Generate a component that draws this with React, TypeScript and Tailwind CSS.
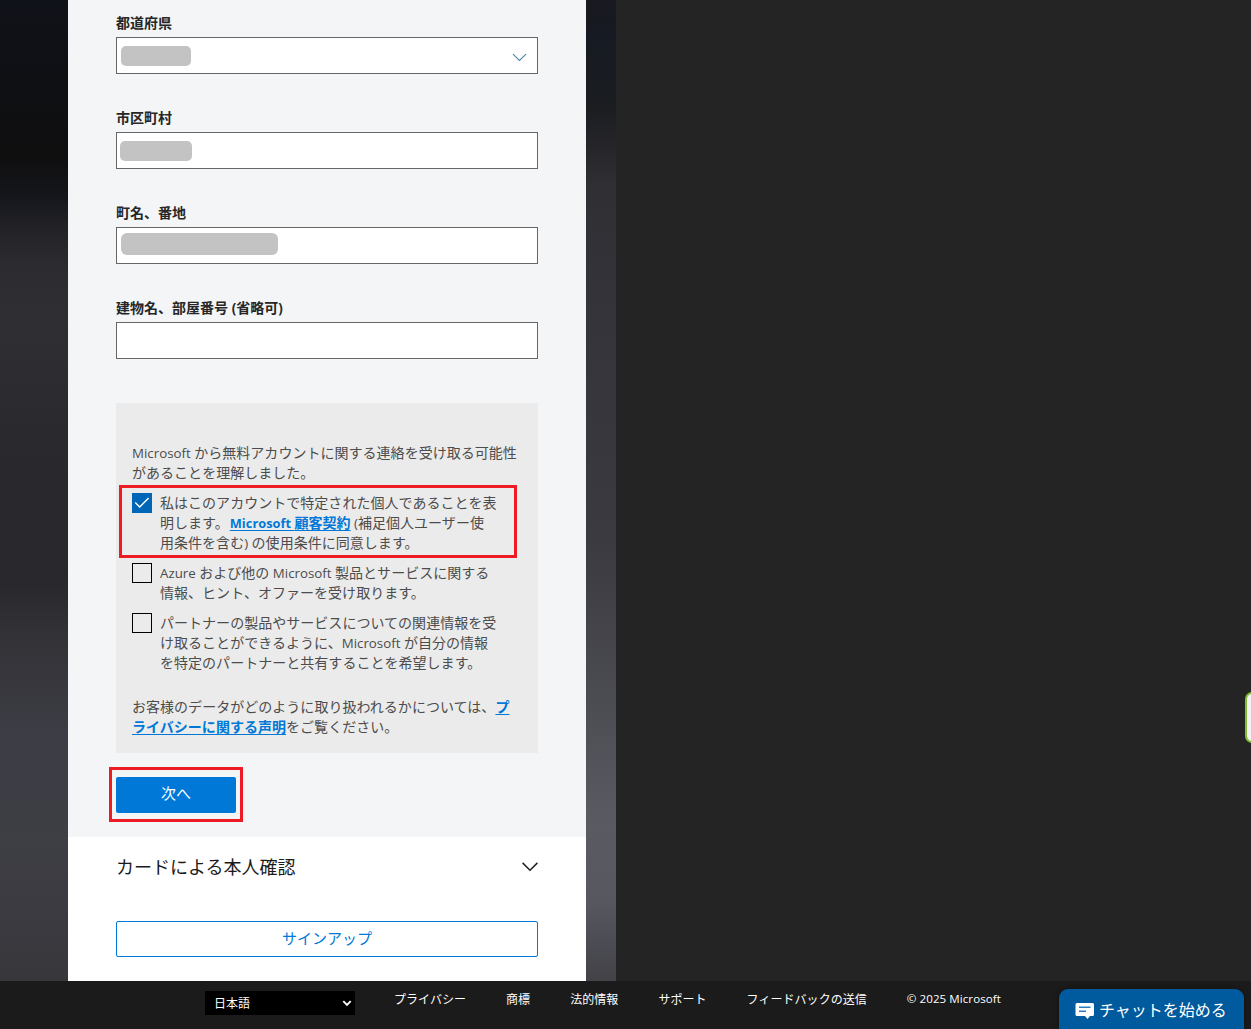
import type { ReactNode } from "react";

const Latin = ({ children }: { children: ReactNode }) => (
  <span className="text-[0.952em] tracking-normal">{children}</span>
);

const Field = ({ label, mask, chevron }: { label: ReactNode; mask?: string; chevron?: boolean }) => (
  <div>
    <div className="mb-1 h-5 text-sm font-bold leading-5 text-[#262626]">{label}</div>
    <div className="flex h-[37px] items-start justify-between border border-[#666] bg-white pr-[10px]">
      <span className={mask ?? ""} />
      {chevron && (
        <svg className="mt-[15px]" width="15" height="9" viewBox="0 0 15 9" fill="none" stroke="#4b86a3" strokeWidth="1.1">
          <path d="M1 1.2 7.5 7.5 14 1.2" />
        </svg>
      )}
    </div>
  </div>
);

const CheckItem = ({ checked, lines, highlighted }: { checked?: boolean; lines: ReactNode[]; highlighted?: boolean }) => (
  <div className="relative mt-[10px] flex gap-2">
    {highlighted && (
      <div className="absolute -left-[13px] -top-2 h-[73px] w-[398px] border-[3px] border-[#ed1c24]" />
    )}
    {checked ? (
      <span className="flex size-5 shrink-0 items-center justify-center bg-[#0067b8]">
        <svg width="20" height="20" viewBox="0 0 20 20" fill="none" stroke="white" strokeWidth="1.4">
          <path d="m3.3 9.600 4.400 4.500 8.900-9.200" />
        </svg>
      </span>
    ) : (
      <span className="size-5 shrink-0 border border-black" />
    )}
    <div>
      {lines.map((line, i) => (
        <div key={i} className="h-5 leading-5">{line}</div>
      ))}
    </div>
  </div>
);

const Link = ({ children }: { children: ReactNode }) => (
  <a className="font-bold text-[#0078d7] underline underline-offset-2">{children}</a>
);

export default function App() {
  return (
    <div className="relative flex h-[1029px] w-[1251px] flex-col overflow-hidden whitespace-nowrap bg-[#242424] font-['Open_Sans','Noto_Sans_CJK_JP',sans-serif]">
      <div className="flex h-[981px]">
        <div className="w-[68px] bg-[linear-gradient(180deg,#101219_0%,#0f1014_8%,#0f0f10_16%,#15161b_20%,#212126_23%,#2b2b30_27%,#2e2e33_33%,#29292e_45%,#28282c_59%,#333237_65%,#3c3c44_74%,#3e3e45_86%,#38373c_100%)]" />
        <main className="flex w-[518px] flex-col bg-white">
          <section className="h-[837px] bg-[#f3f5f7] px-12 pt-[13px]">
            <div className="flex flex-col gap-[34px]">
              <Field label="都道府県" mask="ml-1 mt-2 h-5 w-[70px] rounded-[5px] bg-[#c3c3c3]" chevron />
              <Field label="市区町村" mask="ml-[3px] mt-2 h-5 w-[72px] rounded-[5px] bg-[#c3c3c3]" />
              <Field label="町名、番地" mask="ml-1 mt-[5px] h-[22px] w-[157px] rounded-[6px] bg-[#c3c3c3]" />
              <Field label={<>建物名、部屋番号 <Latin>(</Latin>省略可<Latin>)</Latin></>} />
            </div>
            <div className="mt-11 h-[350px] bg-[#ebebeb] px-4 pt-10 text-sm leading-5 tracking-[0.03px] text-[#4c4c4c]">
              <p className="h-5"><Latin>Microsoft </Latin>から無料アカウントに関する連絡を受け取る可能性</p>
              <p className="h-5">があることを理解しました。</p>
              <CheckItem
                checked
                highlighted
                lines={[
                  "私はこのアカウントで特定された個人であることを表",
                  <>明します。<Link><span className="ml-px text-[0.915em]">Microsoft </span>顧客契約</Link><Latin> (</Latin>補足個人ユーザー使</>,
                  <>用条件を含む<Latin>) </Latin>の使用条件に同意します。</>,
                ]}
              />
              <CheckItem
                lines={[
                  <><Latin>Azure </Latin>および他の<Latin> Microsoft </Latin>製品とサービスに関する</>,
                  "情報、ヒント、オファーを受け取ります。",
                ]}
              />
              <CheckItem
                lines={[
                  "パートナーの製品やサービスについての関連情報を受",
                  <>け取ることができるように、<Latin>Microsoft </Latin>が自分の情報</>,
                  "を特定のパートナーと共有することを希望します。",
                ]}
              />
              <p className="mt-6 h-5">お客様のデータがどのように取り扱われるかについては、<Link>プ</Link></p>
              <p className="h-5"><Link>ライバシーに関する声明</Link>をご覧ください。</p>
            </div>
            <div className="relative mt-6 w-[120px]">
              <div className="absolute -left-[7px] -top-[10px] h-[55px] w-[134px] border-[3px] border-[#ed1c24]" />
              <button className="flex h-9 w-full items-center justify-center rounded-[2px] bg-[#0078d7] pb-[3px] text-[15px] text-white">次へ</button>
            </div>
          </section>
          <section className="px-12 pt-4">
            <div className="flex h-7 items-center justify-between text-lg leading-7 text-[#1b1b1b]">
              <h2>カードによる本人確認</h2>
              <svg width="16" height="10" viewBox="0 0 16 10" fill="none" stroke="#222" strokeWidth="1.5">
                <path d="M.6.9 8 8.3 15.4.9" />
              </svg>
            </div>
            <button className="mt-10 flex h-9 w-full items-center justify-center rounded-[2px] border border-[#0078d7] pb-0.5 text-[15px] text-[#0078d7]">サインアップ</button>
          </section>
        </main>
        <div className="w-[30px] bg-[linear-gradient(180deg,#181820_0%,#161a22_4%,#1b1d21_11%,#25252a_15%,#302f34_19%,#333238_27%,#36363c_40%,#3b3a40_55%,#4a4a51_70%,#5a5a62_84%,#57575f_92%,#4c4c54_96%,#424247_100%)]" />
      </div>
      <footer className="flex h-12 items-start bg-[#1b1b1b] pl-[205px] text-xs text-white">
        <div className="mt-[10px] flex h-6 w-[150px] items-center justify-between bg-black pl-[9px] pr-[3px]">
          <span className="pt-0.5">日本語</span>
          <svg width="10" height="7" viewBox="0 0 9 7" fill="none" stroke="white" strokeWidth="1.9">
            <path d="m.8 1.2 3.7 3.7 3.7-3.7" />
          </svg>
        </div>
        <nav className="ml-[39px] mt-[10px] flex gap-10 leading-[18px] tracking-[0.05px]">
          <a>プライバシー</a>
          <a>商標</a>
          <a>法的情報</a>
          <a>サポート</a>
          <a>フィードバックの送信</a>
          <span className="-mt-px text-[0.965em]">© 2025 Microsoft</span>
        </nav>
      </footer>
      <button className="absolute bottom-0 left-[1059px] flex h-10 w-[185px] items-center rounded-t-[9px] bg-[#005a9e] pl-4 pt-0.5 text-base text-white shadow-[0_0_6px_rgba(0,0,0,0.4)]">
        <svg className="mr-1 mt-0.5" width="20" height="18" viewBox="0 0 20 18">
          <path fill="white" d="M2 1h15.5A1.5 1.5 0 0 1 19 2.5v10a1.500 1.500 0 0 1-1.500 1.500H15l-2.500 3-2.500-3H2a1.500 1.500 0 0 1-1.500-1.500v-10A1.500 1.500 0 0 1 2 1Z" />
          <path stroke="#2b7cc0" strokeWidth="1.6" d="M4 5.200h11.500M4 9.300h7" />
        </svg>
        <span>チャットを始める</span>
      </button>
      <div className="absolute left-[1245px] top-[692px] h-[51px] w-5 rounded-[7px] border-2 border-[#82bc36] bg-[#f2f2f2]" />
    </div>
  );
}
